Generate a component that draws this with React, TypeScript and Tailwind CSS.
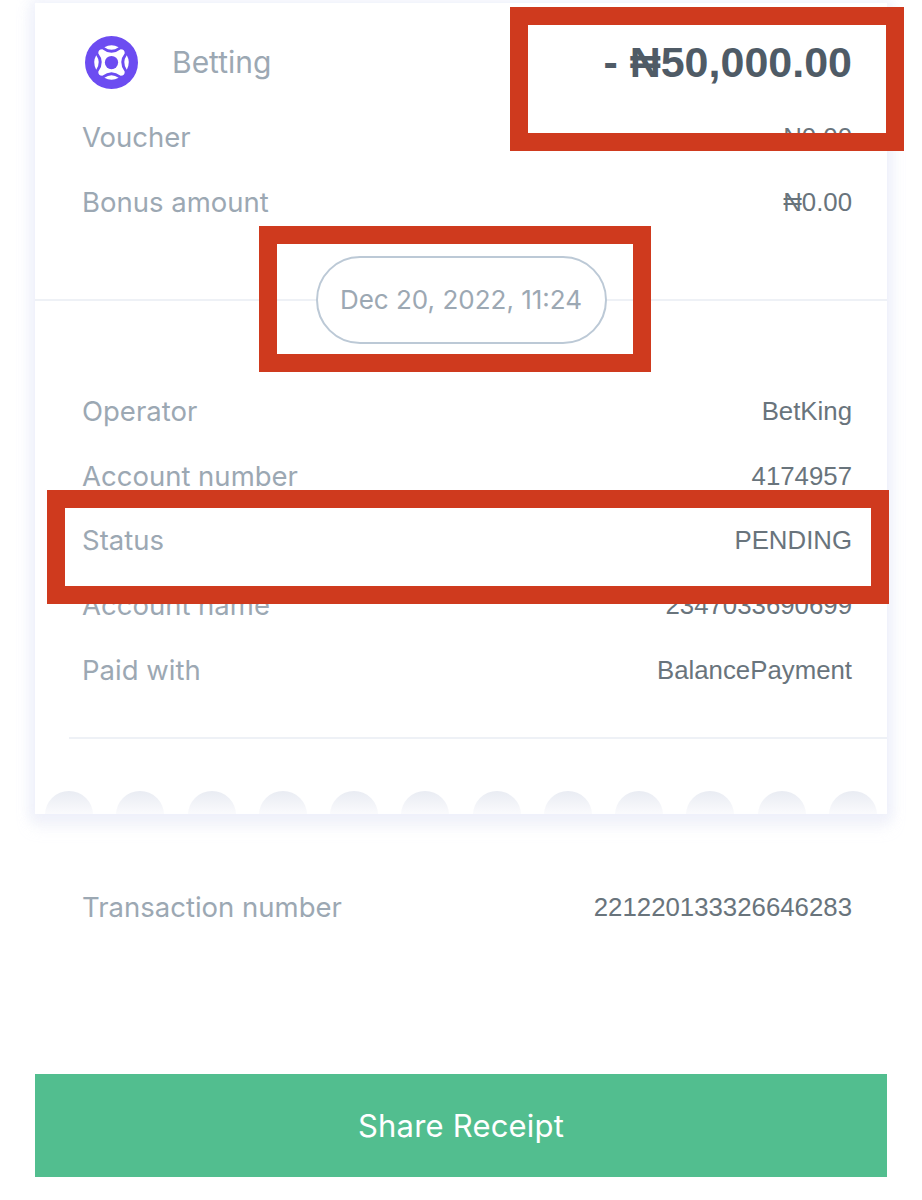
const sans = "font-['Inter',sans-serif]";
const arial = "font-['Liberation_Sans',Arial,sans-serif]";

function Row({ label, value, className = "" }: { label: string; value: string; className?: string }) {
  return (
    <div className={`flex items-center justify-between pl-[47px] pr-[35px] ${className}`}>
      <span className={`${sans} text-[27.5px] leading-[32px] text-[#9CA8B3]`}>{label}</span>
      <span className={`${arial} text-[25.8px] leading-[32px] text-[#69747C]`}>{value}</span>
    </div>
  );
}

function BettingIcon() {
  return (
    <svg width="53" height="53" viewBox="0 0 52 52">
      <circle cx="26" cy="26" r="26" fill="#6C4CF1" />
      <path d="M19 11 Q26 7 33 11 Q26 16 19 11Z M19 41 Q26 45 33 41 Q26 36 19 41Z" fill="#fff" />
      <path d="M11 19 Q7 26 11 33 Q16 26 11 19Z M41 19 Q45 26 41 33 Q36 26 41 19Z" fill="#fff" />
      <path d="M17 13 Q26 20 35 13 Q39 13 39 17 Q32 26 39 35 Q39 39 35 39 Q26 32 17 39 Q13 39 13 35 Q20 26 13 17 Q13 13 17 13Z" fill="#fff" />
      <circle cx="26" cy="26" r="6.5" fill="#6C4CF1" />
    </svg>
  );
}

function RedBox({ className }: { className: string }) {
  return <div className={`absolute border-[18px] border-[#CF3A1E] ${className}`} />;
}

export default function App() {
  const scallops = Array.from({ length: 12 });
  return (
    <div className="relative h-[1200px] w-[922px] overflow-hidden bg-white">
      <div className="px-[35px] pt-[3px]">
        <div className="bg-white shadow-[0_0_12px_5px_rgba(236,239,250,0.8),0_10px_14px_2px_rgba(238,240,248,0.7)]">
          <div className="flex h-[118px] items-center pl-[50px] pr-[35px]">
            <BettingIcon />
            <span className={`${sans} ml-[34px] text-[30px] text-[#9CA8B3]`}>Betting</span>
            <span className={`${arial} ml-auto text-[43px] font-bold text-[#4F5B66]`}>- ₦50,000.00</span>
          </div>
          <div className="flex flex-col gap-[33px]">
            <Row label="Voucher" value="₦0.00" />
            <Row label="Bonus amount" value="₦0.00" />
          </div>
          <div className="relative mt-[38px] flex h-[87px] items-center justify-center">
            <div className="absolute inset-x-0 top-[43px] h-[2px] bg-[#EEF1F6]" />
            <div className={`${sans} relative flex h-[88px] w-[291px] items-center justify-center rounded-full border-[2px] border-[#BCC9D6] bg-white text-[26px] text-[#9CA8B3]`}>
              Dec 20, 2022, 11:24
            </div>
          </div>
          <div className="flex flex-col gap-[32.7px] pt-[52px]">
            <Row label="Operator" value="BetKing" />
            <Row label="Account number" value="4174957" />
            <Row label="Status" value="PENDING" />
            <Row label="Account name" value="2347033690699" />
            <Row label="Paid with" value="BalancePayment" />
          </div>
          <div className="ml-[34px] mt-[51px] h-[2px] bg-[#EEF1F6]" />
          <div className="h-[75.6px]" />
        </div>
        <div className="relative z-10 -mt-[23px] flex h-[23px] justify-between overflow-hidden px-[10px]">
          {scallops.map((_, i) => (
            <div key={i} className="h-[48px] w-[48px] shrink-0 rounded-full bg-gradient-to-b from-[#E9ECF3] to-[#FBFBFD] to-[50%]" />
          ))}
        </div>
        <div className="flex items-center justify-between pl-[47px] pr-[35px] pt-[77px]">
          <span className={`${sans} text-[27.5px] leading-[32px] text-[#9CA8B3]`}>Transaction number</span>
          <span className={`${arial} text-[25.8px] leading-[32px] text-[#69747C]`}>221220133326646283</span>
        </div>
        <button className={`${sans} mt-[151px] flex h-[103px] w-full items-center justify-center bg-[#52BE8F] text-[31px] tracking-[0.2px] text-white`}>
          Share Receipt
        </button>
      </div>
      <RedBox className="left-[510px] top-[7px] h-[144px] w-[394px]" />
      <RedBox className="left-[259px] top-[226px] h-[146px] w-[392px]" />
      <RedBox className="left-[47px] top-[490px] h-[114px] w-[842px]" />
    </div>
  );
}
